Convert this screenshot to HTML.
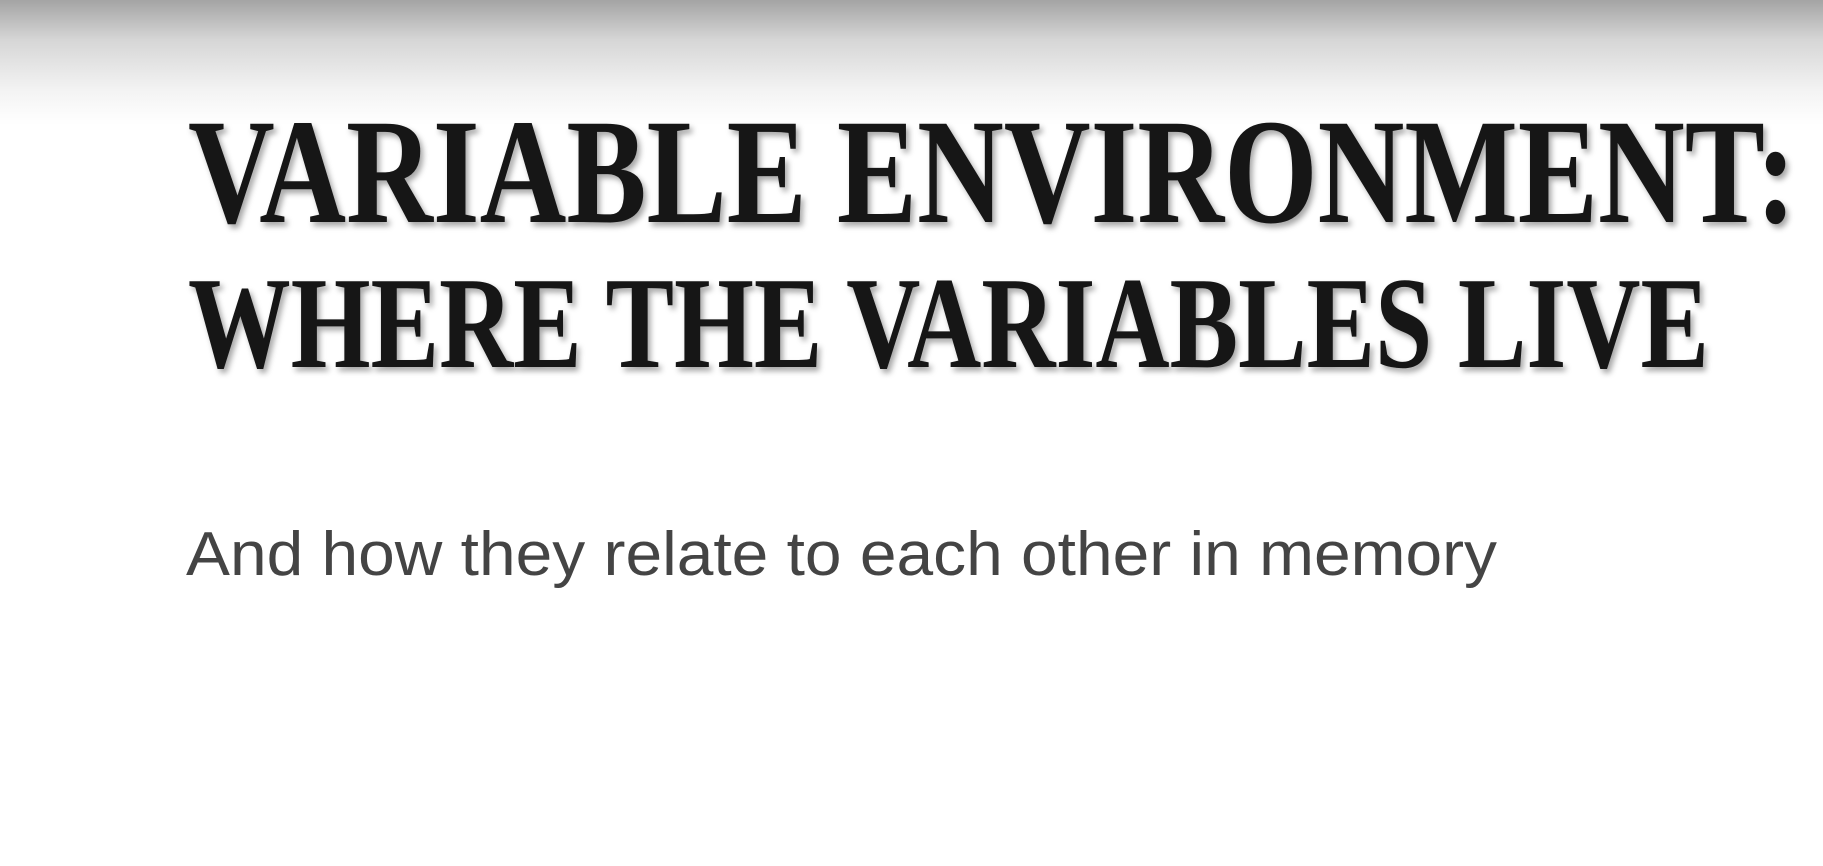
<!DOCTYPE html>
<html>
<head>
<meta charset="utf-8">
<style>
  html,body{margin:0;padding:0;}
  body{width:1823px;height:866px;overflow:hidden;
    background:linear-gradient(to bottom,#a4a4a4 0px,#d6d6d6 40px,#f3f3f3 90px,#ffffff 125px,#ffffff 100%);}
  svg{position:absolute;left:0;top:0;}
</style>
</head>
<body>
<svg width="1823" height="866" viewBox="0 0 1823 866" xmlns="http://www.w3.org/2000/svg">
  <defs>
    <filter id="sh" x="-5%" y="-20%" width="110%" height="140%">
      <feDropShadow dx="3" dy="4" stdDeviation="3" flood-color="#000" flood-opacity="0.35"/>
    </filter>
  </defs>
  <g filter="url(#sh)" font-family="'Liberation Serif', serif" font-weight="bold" fill="#151515">
    <text x="188" y="222" font-size="150" textLength="1608" lengthAdjust="spacingAndGlyphs">VARIABLE ENVIRONMENT:</text>
    <text x="188" y="367" font-size="131" textLength="1521" lengthAdjust="spacingAndGlyphs">WHERE THE VARIABLES LIVE</text>
  </g>
  <text x="186" y="575" font-family="'Liberation Sans', sans-serif" font-size="62" fill="#444" textLength="1311" lengthAdjust="spacingAndGlyphs">And how they relate to each other in memory</text>
</svg>
</body>
</html>
